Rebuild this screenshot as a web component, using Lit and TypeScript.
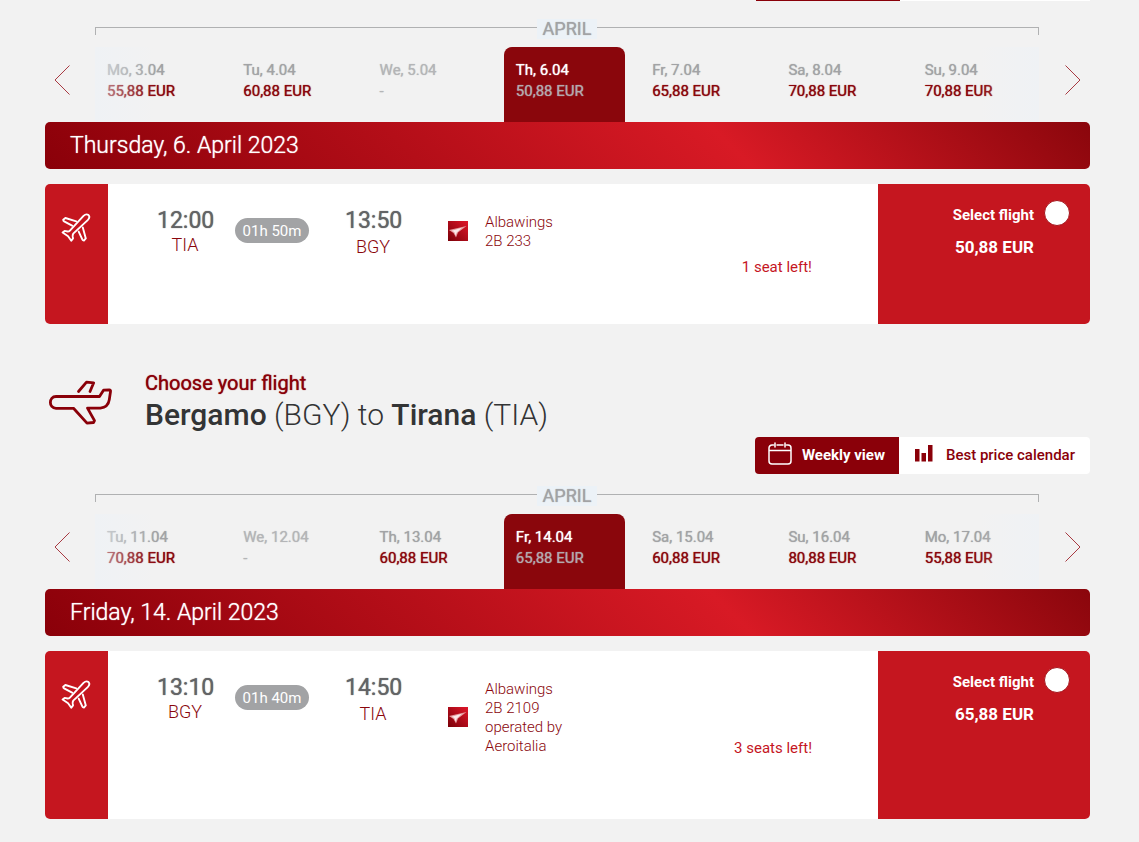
import { LitElement, html, css } from "lit";
import { customElement, property } from "lit/decorators.js";

interface Day {
  date: string;
  price: string;
  dim?: boolean;
}

interface Flight {
  id: string;
  departTime: string;
  departCode: string;
  arriveTime: string;
  arriveCode: string;
  duration: string;
  carrier: string[];
  seats: string;
  price: string;
}

const OUTBOUND_DAYS: Day[] = [
  { date: "Mo, 3.04", price: "55,88 EUR" },
  { date: "Tu, 4.04", price: "60,88 EUR" },
  { date: "We, 5.04", price: "-", dim: true },
  { date: "Th, 6.04", price: "50,88 EUR" },
  { date: "Fr, 7.04", price: "65,88 EUR" },
  { date: "Sa, 8.04", price: "70,88 EUR" },
  { date: "Su, 9.04", price: "70,88 EUR" },
];

const RETURN_DAYS: Day[] = [
  { date: "Tu, 11.04", price: "70,88 EUR" },
  { date: "We, 12.04", price: "-", dim: true },
  { date: "Th, 13.04", price: "60,88 EUR" },
  { date: "Fr, 14.04", price: "65,88 EUR" },
  { date: "Sa, 15.04", price: "60,88 EUR" },
  { date: "Su, 16.04", price: "80,88 EUR" },
  { date: "Mo, 17.04", price: "55,88 EUR" },
];

const OUTBOUND: Flight = {
  id: "outbound",
  departTime: "12:00",
  departCode: "TIA",
  arriveTime: "13:50",
  arriveCode: "BGY",
  duration: "01h 50m",
  carrier: ["Albawings", "2B 233"],
  seats: "1 seat left!",
  price: "50,88 EUR",
};

const RETURN: Flight = {
  id: "return",
  departTime: "13:10",
  departCode: "BGY",
  arriveTime: "14:50",
  arriveCode: "TIA",
  duration: "01h 40m",
  carrier: ["Albawings", "2B 2109", "operated by", "Aeroitalia"],
  seats: "3 seats left!",
  price: "65,88 EUR",
};

// Thickens regular-weight text without changing its widths.
const heavy = css`
  .heavy {
    font-weight: 400;
    text-shadow: 0 0 1px currentColor;
  }
`;

@customElement("view-toggle")
export class ViewToggle extends LitElement {
  static styles = css`
    :host {
      display: flex;
      justify-content: flex-end;
    }
    .tab {
      display: flex;
      align-items: center;
      height: 37px;
      border: 0;
      font: 400 15px/20px Roboto, sans-serif;
      cursor: pointer;
    }
    .weekly {
      gap: 10px;
      padding: 0 14px 1px 13px;
      border-radius: 4px 0 0 4px;
      background: #8a0009;
      color: #fff;
      font-weight: 700;
    }
    .best {
      gap: 13px;
      padding: 0 15px 1px 16px;
      border-radius: 0 4px 4px 0;
      background: #fff;
      color: #8a0009;
      font-weight: 500;
    }
    .icon {
      display: block;
      margin-bottom: 3px;
    }
  `;

  render() {
    return html`
      <button class="tab weekly" type="button">
        <svg class="icon" width="24" height="23" viewBox="0 0 24 23" fill="none" stroke="#fff" stroke-width="1.5" stroke-linecap="round" aria-hidden="true">
          <path d="M5.5 3H4a3 3 0 0 0-3 3v13a3 3 0 0 0 3 3h16a3 3 0 0 0 3-3V6a3 3 0 0 0-3-3h-1.5M9 3h6M7 1v4M17 1v4M1 8.5h22" />
        </svg>
        <span>Weekly view</span>
      </button>
      <button class="tab best" type="button">
        <svg class="icon" width="18" height="17" viewBox="0 0 18 17" fill="#8a0009" aria-hidden="true">
          <path d="M0 4h4.500v12.500H0zM6.500 8h4.500v8.500h-4.500zM13 0h4.500v16.500h-4.500z" />
        </svg>
        <span>Best price calendar</span>
      </button>
    `;
  }
}

@customElement("week-strip")
export class WeekStrip extends LitElement {
  @property({ attribute: false }) days: Day[] = [];
  @property() month = "";
  @property({ type: Number }) active = 3;

  static styles = [
    heavy,
    css`
      :host {
        display: grid;
        grid-template-columns: 50px minmax(0, 1fr) 51px;
        padding-top: 12px;
      }
      .month {
        grid-column: 2;
        display: flex;
        align-items: flex-start;
        height: 20px;
        margin-bottom: 8px;
        color: #a2a3a5;
        font-size: 18px;
        line-height: 20px;
      }
      .month::before,
      .month::after {
        content: "";
        flex: 1;
        height: 7px;
        margin-top: 8px;
        border-top: 1px solid #b0b1b2;
      }
      .month::before {
        border-left: 1px solid #b0b1b2;
      }
      .month::after {
        border-right: 1px solid #b0b1b2;
      }
      .name {
        padding: 0 6px;
        background: #ecf2f7;
      }
      .arrow {
        display: flex;
        align-items: center;
        justify-content: center;
        grid-row: 2;
        padding: 0 0 9px;
        border: 0;
        background: none;
        cursor: pointer;
      }
      .prev {
        grid-column: 1;
        padding-right: 15px;
      }
      .next {
        grid-column: 3;
        padding-left: 15px;
      }
      .days {
        grid-column: 2;
        grid-row: 2;
        position: relative;
        display: grid;
        grid-template-columns: repeat(7, minmax(0, 1fr));
        gap: 15px;
        padding-right: 5px;
      }
      .days::before,
      .days::after {
        content: "";
        position: absolute;
        top: 0;
        bottom: 0;
        width: 60px;
        pointer-events: none;
      }
      .days::before {
        left: 0;
        background: linear-gradient(90deg, rgba(237, 242, 247, 0.6), rgba(242, 242, 242, 0));
      }
      .days::after {
        right: 0;
        background: linear-gradient(270deg, rgba(237, 242, 247, 0.6), rgba(242, 242, 242, 0));
      }
      .day {
        height: 75px;
        padding: 0 12px 8px;
        border: 0;
        border-radius: 8px 8px 0 0;
        background: none;
        color: #8a060c;
        font: 400 15px/21px Roboto, sans-serif;
        text-align: left;
        cursor: pointer;
      }
      .date,
      .price {
        display: block;
      }
      .date {
        color: #a2a3a5;
      }
      .dim,
      .dim .date {
        color: #b4b5b7;
      }
      .active {
        background: #8a060c;
        color: #b4a9ad;
      }
      .active .date {
        color: #fff;
      }
    `,
  ];

  render() {
    return html`
      <div class="month"><span class="name heavy">${this.month}</span></div>
      <button class="arrow prev" type="button" aria-label="Previous week">
        <svg width="17" height="30" viewBox="0 0 17 30" fill="none" stroke="#a83a42" aria-hidden="true">
          <path d="M15.500 .5 1 15l14.500 14.500" />
        </svg>
      </button>
      <div class="days">
        ${this.days.map(
          (day, i) => html`
            <button class="day ${i === this.active ? "active" : ""} ${day.dim ? "dim" : ""}" type="button">
              <span class="date heavy">${day.date}</span>
              <span class="price heavy">${day.price}</span>
            </button>
          `,
        )}
      </div>
      <button class="arrow next" type="button" aria-label="Next week">
        <svg width="17" height="30" viewBox="0 0 17 30" fill="none" stroke="#a83a42" aria-hidden="true">
          <path d="M1.500 .5 16 15 1.500 29.500" />
        </svg>
      </button>
    `;
  }
}

@customElement("flight-card")
export class FlightCard extends LitElement {
  @property({ attribute: false }) flight!: Flight;

  static styles = [
    heavy,
    css`
      :host {
        display: flex;
        min-height: 140px;
        border-radius: 5px;
        overflow: hidden;
        background: #fff;
        color: #8a060c;
      }
      .strip {
        flex: none;
        width: 63px;
        padding: 29px 0 0 16px;
        box-sizing: border-box;
        background: #c5161f;
      }
      .icon {
        display: block;
      }
      .body {
        flex: 1;
        display: flex;
        align-items: flex-start;
        padding: 0 66px 0 49px;
      }
      .stop {
        width: 56px;
        margin-top: 25px;
        text-align: center;
        font-size: 18px;
        font-weight: 300;
        line-height: 24px;
      }
      .time {
        display: block;
        color: #636466;
        font-size: 23px;
      }
      .arrival .time {
        margin-bottom: 2px;
      }
      .duration {
        width: 74px;
        margin: 34px 36px 0 22px;
        padding-top: 1px;
        border-radius: 13px;
        background: #a2a3a5;
        color: #fff;
        font-size: 15px;
        line-height: 24px;
        text-align: center;
        white-space: nowrap;
      }
      .carrier {
        display: flex;
        align-items: center;
        gap: 17px;
        margin: 29px 0 63px 47px;
        font-size: 15px;
        font-weight: 300;
        line-height: 19px;
      }
      .logo {
        margin-bottom: 2px;
      }
      .line {
        display: block;
        white-space: nowrap;
      }
      .seats {
        align-self: center;
        margin: 0 0 0 auto;
        padding-top: 26px;
        color: #c5161f;
        font-size: 15px;
        font-weight: 400;
        line-height: 20px;
      }
      .select {
        flex: none;
        display: grid;
        grid-template-columns: 1fr 26px;
        grid-template-rows: 26px 24px;
        column-gap: 10px;
        row-gap: 9px;
        align-items: center;
        align-content: start;
        box-sizing: border-box;
        width: 212px;
        padding: 16px 20px 0 0;
        background: #c5161f;
        color: #fff;
        font-size: 15px;
        font-weight: 700;
        text-align: right;
        cursor: pointer;
      }
      .caption {
        padding-top: 4px;
      }
      .price {
        grid-row: 2;
        font-size: 17px;
      }
      .radio {
        grid-row: 1;
        grid-column: 2;
        appearance: none;
        width: 26px;
        height: 26px;
        margin: 0;
        border: 1px solid #a5131a;
        border-radius: 50%;
        background: #fff;
      }
    `,
  ];

  render() {
    const f = this.flight;
    return html`
      <div class="strip">
        <svg class="icon" width="30" height="30" viewBox="0 0 30 30" fill="none" stroke="#fff" stroke-width="1.900" stroke-linejoin="round" stroke-linecap="round" aria-hidden="true">
          <path d="M22.500 2.900c1.500-1.400 3.700-1.800 5-.8 1.200 1.300.7 3.500-.8 5L12.500 20.400c-.8.900-.9 1.900-.8 3l.3 2-1.700 2.400-3.200-4.500L1.600 19.500l2-1.600 3 .6c1 0 1.700-.2 2.300-.9z" />
          <path d="M15.300 8.300 4.400 5 2.200 6.800c0 .8.300 1.300.9 1.600l8 4.300M21.800 14.500l3 10.900-1.900 2.200c-.7-.1-1.200-.4-1.500-1l-3.700-8" />
        </svg>
      </div>
      <div class="body">
        <div class="stop"><span class="time heavy">${f.departTime}</span>${f.departCode}</div>
        <div class="duration">${f.duration}</div>
        <div class="stop arrival"><span class="time heavy">${f.arriveTime}</span>${f.arriveCode}</div>
        <div class="carrier">
          <svg class="logo" width="20" height="20" viewBox="0 0 20 20" aria-hidden="true">
            <defs>
              <linearGradient id="tile" x1="0" y1="1" x2="1" y2="0">
                <stop offset="0" stop-color="#7a0008" />
                <stop offset="1" stop-color="#e0162a" />
              </linearGradient>
            </defs>
            <rect width="20" height="20" fill="url(#tile)" />
            <path d="M1 9 18.500 5 10 11.500 8 16.500 5.500 12z" fill="#e59a9e" />
            <path d="M3.500 9.700 14 6.800 8.800 11.500 7.600 14.500 6.300 11z" fill="#fbeaea" />
          </svg>
          <div>${f.carrier.map((line) => html`<span class="line">${line}</span>`)}</div>
        </div>
        <p class="seats">${f.seats}</p>
      </div>
      <label class="select">
        <span class="caption">Select flight</span>
        <input class="radio" type="radio" name=${f.id} />
        <span class="price">${f.price}</span>
      </label>
    `;
  }
}

@customElement("app-root")
export class AppRoot extends LitElement {
  static styles = [
    heavy,
    css`
      :host {
        display: block;
        min-height: 100vh;
        box-sizing: border-box;
        padding: 0 49px 23px 45px;
        background: #f2f2f2;
        font-family: Roboto, sans-serif;
      }
      .edge {
        display: grid;
        grid-template-columns: 144px 190px;
        justify-content: end;
        height: 1px;
        margin-bottom: 6px;
      }
      .edge-dark {
        background: #8a0009;
      }
      .edge-light {
        background: #fff;
      }
      .banner {
        margin: 0 0 15px;
        padding: 0 25px;
        border-radius: 5px;
        background: linear-gradient(45deg, #8a0009, #d81a25 65%, #8a060c);
        color: #fff;
        font-size: 23px;
        font-weight: 300;
        line-height: 47px;
        text-shadow: 0 0 1px currentColor;
      }
      .head {
        display: flex;
        gap: 32px;
        align-items: flex-start;
        margin-top: 47px;
        padding-left: 3px;
      }
      .plane {
        flex: none;
        margin-top: 8px;
      }
      .kicker {
        margin: 0;
        color: #8a0009;
        font-size: 20px;
        line-height: 24px;
      }
      .route {
        margin: 0 0 3px;
        color: #333435;
        font-size: 30px;
        font-weight: 300;
        line-height: 39px;
      }
      .city {
        font-weight: 500;
      }
    `,
  ];

  render() {
    return html`
      <section>
        <div class="edge"><div class="edge-dark"></div><div class="edge-light"></div></div>
        <week-strip month="APRIL" .days=${OUTBOUND_DAYS}></week-strip>
        <h2 class="banner">Thursday, 6. April 2023</h2>
        <flight-card .flight=${OUTBOUND}></flight-card>
      </section>
      <section>
        <header class="head">
          <svg class="plane" width="65" height="48" viewBox="0 0 65 48" fill="none" stroke="#8a0009" stroke-width="2.800" stroke-linecap="round" stroke-linejoin="round" aria-hidden="true">
            <path d="M8 17.500h43.500l4-6.300 5.800-.2c1 0 1.400.6 1.200 1.600l-1.200 8c-.8 5.500-4.500 8-9 8.500H39.500l7 12.500-1 1.900-6.500.6L25.500 29.300H8c-7.500 0-7.500-11.800 0-11.800z" />
            <path d="M30.500 12.500 38.500 3.200l7.200.6L42 12.500" />
          </svg>
          <div>
            <p class="kicker heavy">Choose your flight</p>
            <h1 class="route"><span class="city">Bergamo</span> (BGY) to <span class="city">Tirana</span> (TIA)</h1>
          </div>
        </header>
        <view-toggle></view-toggle>
        <week-strip month="APRIL" .days=${RETURN_DAYS}></week-strip>
        <h2 class="banner">Friday, 14. April 2023</h2>
        <flight-card .flight=${RETURN}></flight-card>
      </section>
    `;
  }
}
